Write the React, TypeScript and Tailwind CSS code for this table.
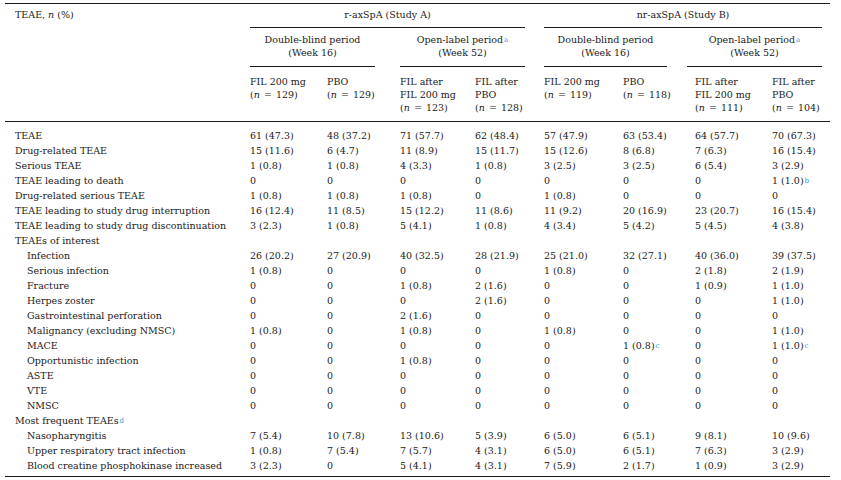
import React from "react";

type Row = { label: React.ReactNode; vals?: React.ReactNode[]; indent?: boolean };

const cols = "grid grid-cols-[245px_77px_73px_75px_69px_79px_64px_85px_58px]";

function Sup({ c }: { c: string }) {
  return <sup className="text-[7px] text-[#2f98d6] ml-[1px] relative -top-[1px]">{c}</sup>;
}

function N({ n }: { n: number }) {
  return (
    <span>
      (<i>n</i> <span className="mx-[1px]">=</span> {n})
    </span>
  );
}

const z = ["0", "0", "0", "0", "0", "0", "0", "0"];

const rows: Row[] = [
  { label: "TEAE", vals: ["61 (47.3)", "48 (37.2)", "71 (57.7)", "62 (48.4)", "57 (47.9)", "63 (53.4)", "64 (57.7)", "70 (67.3)"] },
  { label: "Drug-related TEAE", vals: ["15 (11.6)", "6 (4.7)", "11 (8.9)", "15 (11.7)", "15 (12.6)", "8 (6.8)", "7 (6.3)", "16 (15.4)"] },
  { label: "Serious TEAE", vals: ["1 (0.8)", "1 (0.8)", "4 (3.3)", "1 (0.8)", "3 (2.5)", "3 (2.5)", "6 (5.4)", "3 (2.9)"] },
  {
    label: "TEAE leading to death",
    vals: ["0", "0", "0", "0", "0", "0", "0", <span key="b">1 (1.0)<Sup c="b" /></span>],
  },
  { label: "Drug-related serious TEAE", vals: ["1 (0.8)", "1 (0.8)", "1 (0.8)", "0", "1 (0.8)", "0", "0", "0"] },
  { label: "TEAE leading to study drug interruption", vals: ["16 (12.4)", "11 (8.5)", "15 (12.2)", "11 (8.6)", "11 (9.2)", "20 (16.9)", "23 (20.7)", "16 (15.4)"] },
  { label: "TEAE leading to study drug discontinuation", vals: ["3 (2.3)", "1 (0.8)", "5 (4.1)", "1 (0.8)", "4 (3.4)", "5 (4.2)", "5 (4.5)", "4 (3.8)"] },
  { label: "TEAEs of interest" },
  { label: "Infection", indent: true, vals: ["26 (20.2)", "27 (20.9)", "40 (32.5)", "28 (21.9)", "25 (21.0)", "32 (27.1)", "40 (36.0)", "39 (37.5)"] },
  { label: "Serious infection", indent: true, vals: ["1 (0.8)", "0", "0", "0", "1 (0.8)", "0", "2 (1.8)", "2 (1.9)"] },
  { label: "Fracture", indent: true, vals: ["0", "0", "1 (0.8)", "2 (1.6)", "0", "0", "1 (0.9)", "1 (1.0)"] },
  { label: "Herpes zoster", indent: true, vals: ["0", "0", "0", "2 (1.6)", "0", "0", "0", "1 (1.0)"] },
  { label: "Gastrointestinal perforation", indent: true, vals: ["0", "0", "2 (1.6)", "0", "0", "0", "0", "0"] },
  { label: "Malignancy (excluding NMSC)", indent: true, vals: ["1 (0.8)", "0", "1 (0.8)", "0", "1 (0.8)", "0", "0", "1 (1.0)"] },
  {
    label: "MACE",
    indent: true,
    vals: ["0", "0", "0", "0", "0", <span key="c1">1 (0.8)<Sup c="c" /></span>, "0", <span key="c2">1 (1.0)<Sup c="c" /></span>],
  },
  { label: "Opportunistic infection", indent: true, vals: ["0", "0", "1 (0.8)", "0", "0", "0", "0", "0"] },
  { label: "ASTE", indent: true, vals: z },
  { label: "VTE", indent: true, vals: z },
  { label: "NMSC", indent: true, vals: z },
  { label: <span>Most frequent TEAEs<Sup c="d" /></span> },
  { label: "Nasopharyngitis", indent: true, vals: ["7 (5.4)", "10 (7.8)", "13 (10.6)", "5 (3.9)", "6 (5.0)", "6 (5.1)", "9 (8.1)", "10 (9.6)"] },
  { label: "Upper respiratory tract infection", indent: true, vals: ["1 (0.8)", "7 (5.4)", "7 (5.7)", "4 (3.1)", "6 (5.0)", "6 (5.1)", "7 (6.3)", "3 (2.9)"] },
  { label: "Blood creatine phosphokinase increased", indent: true, vals: ["3 (2.3)", "0", "5 (4.1)", "4 (3.1)", "7 (5.9)", "2 (1.7)", "1 (0.9)", "3 (2.9)"] },
];

const colHeads: React.ReactNode[][] = [
  ["FIL 200 mg", <N n={129} />],
  ["PBO", <N n={129} />],
  ["FIL after", "FIL 200 mg", <N n={123} />],
  ["FIL after", "PBO", <N n={128} />],
  ["FIL 200 mg", <N n={119} />],
  ["PBO", <N n={118} />],
  ["FIL after", "FIL 200 mg", <N n={111} />],
  ["FIL after", "PBO", <N n={104} />],
];

export default function App() {
  return (
    <div className="w-[841px] h-[480px] bg-white pt-[3px] text-[#1a1a1a] text-[9.5px] leading-[13px] font-['DejaVu_Serif',serif]">
      <div className="ml-[5px] w-[825px] border-t border-[#1a1a1a]">
        {/* study row */}
        <div className={cols + " pt-[4px]"}>
          <div className="pl-[10px]">
            TEAE, <i>n</i> (%)
          </div>
          <div className="col-span-4 mr-[19px] pb-[6px] border-b border-[#1a1a1a] text-center">r-axSpA (Study A)</div>
          <div className="col-span-4 mr-[8px] pb-[6px] border-b border-[#1a1a1a] text-center">nr-axSpA (Study B)</div>
        </div>

        {/* period row */}
        <div className={cols}>
          <div />
          <div className="col-span-2 mr-[25px] pt-[5px] pb-[7px] border-b border-[#1a1a1a] text-center">
            Double-blind period
            <br />
            (Week 16)
          </div>
          <div className="col-span-2 mr-[19px] pt-[5px] pb-[7px] border-b border-[#1a1a1a] text-center">
            Open-label period<Sup c="a" />
            <br />
            (Week 52)
          </div>
          <div className="col-span-2 mr-[20px] pt-[5px] pb-[7px] border-b border-[#1a1a1a] text-center">
            Double-blind period
            <br />
            (Week 16)
          </div>
          <div className="col-span-2 mr-[8px] pt-[5px] pb-[7px] border-b border-[#1a1a1a] text-center">
            Open-label period<Sup c="a" />
            <br />
            (Week 52)
          </div>
        </div>

        {/* column heads */}
        <div className={cols + " pt-[8px] pb-[7px] border-b border-[#1a1a1a]"}>
          <div />
          {colHeads.map((lines, i) => (
            <div key={i} className={i === 6 ? "pl-[8px]" : ""}>
              {lines.map((l, j) => (
                <div key={j} className="whitespace-nowrap">
                  {l}
                </div>
              ))}
            </div>
          ))}
        </div>

        {/* body */}
        <div className="pt-[6px] pb-[3px] border-b border-[#1a1a1a] leading-[15px]">
          {rows.map((r, i) => (
            <div key={i} className={cols}>
              <div className={r.indent ? "pl-[22px] whitespace-nowrap" : "pl-[10px] whitespace-nowrap"}>{r.label}</div>
              {(r.vals ?? ["", "", "", "", "", "", "", ""]).map((v, j) => (
                <div key={j} className={j === 6 ? "pl-[8px] whitespace-nowrap" : "whitespace-nowrap"}>
                  {v}
                </div>
              ))}
            </div>
          ))}
        </div>
      </div>
    </div>
  );
}
